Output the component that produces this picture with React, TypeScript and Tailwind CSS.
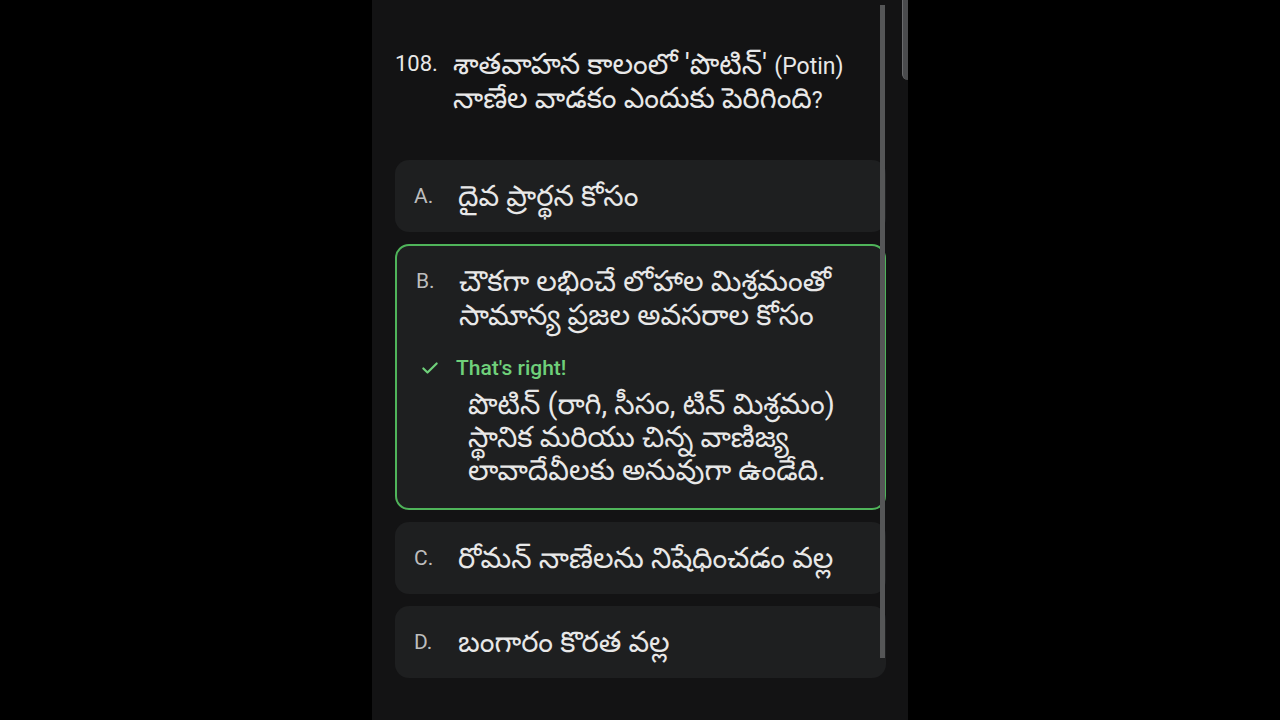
import React from 'react'

const options = [
  { key: 'A.', text: ['దైవ ప్రార్థన కోసం'] },
  {
    key: 'B.',
    text: ['చౌకగా లభించే లోహాల మిశ్రమంతో', 'సామాన్య ప్రజల అవసరాల కోసం'],
    correct: true,
  },
  { key: 'C.', text: ['రోమన్ నాణేలను నిషేధించడం వల్ల'] },
  { key: 'D.', text: ['బంగారం కొరత వల్ల'] },
]

const Check = () => (
  <svg width="20" height="20" viewBox="0 0 24 24" fill="none" className="shrink-0">
    <path d="M4 12.5l5 5L20 6.5" stroke="#6fd07a" strokeWidth="2.6" strokeLinecap="round" strokeLinejoin="round" />
  </svg>
)

const App = () => (
  <div
    className="flex justify-center w-full h-[720px] bg-black overflow-hidden"
    style={{ fontFamily: 'Roboto, "Noto Sans Telugu", "Noto Sans", sans-serif' }}
  >
    <div className="relative w-[536px] h-full bg-[#131314] pl-[23px] pr-[22px] pt-[47px]">
      <div className="flex text-[#e8e8e8]">
        <span className="w-[58px] shrink-0 text-[22px] leading-[34px]">108.</span>
        <p className="text-[29px] leading-[34px]">
          <span className="block h-[34px]">
            శాతవాహన కాలంలో 'పొటిన్' <span className="text-[23px] leading-none">(Potin)</span>
          </span>
          <span className="block h-[34px]">
            నాణేల వాడకం ఎందుకు పెరిగింది<span className="text-[23px] leading-none">?</span>
          </span>
        </p>
      </div>

      <div className="mt-[45px] flex flex-col gap-3">
        {options.map((o) =>
          o.correct ? (
            <div
              key={o.key}
              className="rounded-[14px] border-2 border-[#4fb45a] bg-[#1e1f20] pl-[19px] pr-4 pt-[18px] pb-[21px]"
            >
              <div className="flex leading-[34px] text-[#e8e8e8]">
                <span className="w-[43px] shrink-0 text-[21px] text-[#bdbdbd]">{o.key}</span>
                <p className="text-[29px]">
                  {o.text[0]}
                  <br />
                  {o.text[1]}
                </p>
              </div>
              <div className="mt-[24px] flex items-center gap-[16px] pl-[4px] text-[21px] leading-6 font-medium text-[#6fd07a]">
                <Check />
                <span>That's right!</span>
              </div>
              <p className="mt-2 pl-[52px] text-[29px] leading-[33px] text-[#e8e8e8]">
                పొటిన్ (రాగి, సీసం, టిన్ మిశ్రమం)
                <br />
                స్థానిక మరియు చిన్న వాణిజ్య
                <br />
                లావాదేవీలకు అనువుగా ఉండేది.
              </p>
            </div>
          ) : (
            <div
              key={o.key}
              className="flex h-[72px] items-center rounded-[14px] bg-[#1e1f20] pl-[19px] leading-[34px] text-[#e8e8e8]"
            >
              <span className="w-[44px] shrink-0 text-[21px] text-[#bdbdbd]">{o.key}</span>
              <span className="text-[29px]">{o.text[0]}</span>
            </div>
          )
        )}
      </div>

      {/* inner scrollbar */}
      <div className="absolute left-[508px] top-[5px] h-[653px] w-[5px] bg-[#555657]" />
      {/* outer scrollbar */}
      <div className="absolute right-0 top-0 h-[80px] w-[6px] rounded-bl-[6px] bg-[#4a4b4d] border-l border-[#6a6b6d]" />
    </div>
  </div>
)

export default App
